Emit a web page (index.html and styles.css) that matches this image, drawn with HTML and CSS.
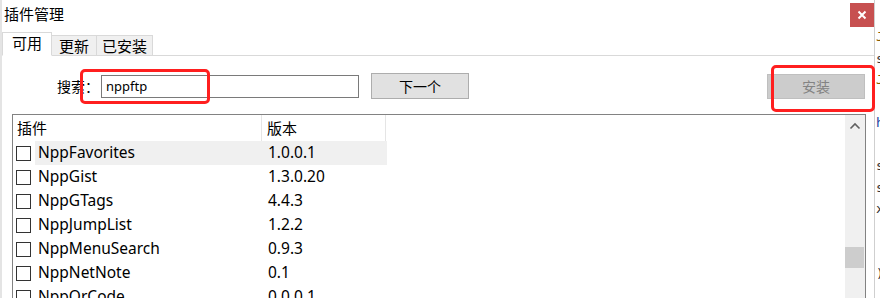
FILE: index.html
```html
<!DOCTYPE html>
<html lang="zh-CN">
<head>
  <meta charset="UTF-8" />
  <title>插件管理</title>
  <link rel="stylesheet" href="styles.css">
</head>
<body>
  <div class="screen">
    <div class="dialog">
      <div class="titlebar">
        <span class="title">插件管理</span>
        <span class="close">
          <svg width="10" height="10" viewBox="0 0 10 10"><path d="M1.5 1.5 L8.5 8.5 M8.5 1.5 L1.5 8.5" stroke="#fff" stroke-width="2"/></svg>
        </span>
      </div>
      <div class="tabs">
        <span class="tab active">可用</span>
        <span class="tab">更新</span>
        <span class="tab">已安装</span>
      </div>
      <div class="panel">
        <div class="search-row">
          <span class="label">搜索：</span>
          <span class="input">nppftp</span>
          <span class="btn">下一个</span>
          <span class="btn disabled">安装</span>
        </div>
        <div class="list">
          <div class="list-head">
            <span class="col">插件</span>
            <span class="col">版本</span>
            <span></span>
          </div>
          <div id="rows"></div>
          <div class="scrollbar">
            <svg class="arrow" width="12" height="8" viewBox="0 0 12 8"><path d="M1.5 6.5 L6 2 L10.5 6.5" fill="none" stroke="#606060" stroke-width="1.6"/></svg>
            <div class="thumb"></div>
          </div>
        </div>
        <span class="mark mark-search"></span>
        <span class="mark mark-install"></span>
      </div>
    </div>
    <div class="editor">
      <span class="c1">J</span><span>s</span><span class="c1">J</span><span>&nbsp;</span><span class="c2">h</span><span>&nbsp;</span><span>s</span><span>s</span><span>x</span><span>&nbsp;</span><span>&nbsp;</span><span>)</span>
    </div>
  </div>
  <script>
    const plugins = [
      ["NppFavorites", "1.0.0.1"],
      ["NppGist", "1.3.0.20"],
      ["NppGTags", "4.4.3"],
      ["NppJumpList", "1.2.2"],
      ["NppMenuSearch", "0.9.3"],
      ["NppNetNote", "0.1"],
      ["NppQrCode", "0.0.0.1"]
    ];
    const rows = document.getElementById("rows");
    plugins.forEach((p, i) => {
      const row = document.createElement("div");
      row.className = "row" + (i === 0 ? " hot" : "");
      row.innerHTML = `<span class="check"></span><span class="name">${p[0]}</span><span class="ver">${p[1]}</span>`;
      rows.appendChild(row);
    });
  </script>
</body>
</html>
```

FILE: styles.css
```css
body {
  margin: 0;
  background: #fff;
  font-family: "Noto Sans", "Noto Sans CJK SC", sans-serif;
  color: #000;
  overflow: hidden;
}
.screen {
  display: flex;
  width: 880px;
  height: 298px;
  overflow: hidden;
}
.dialog {
  width: 872px;
  flex: none;
  border-left: 2px solid #e4e4e4;
  border-right: 1px solid #cfcfcf;
  background: #fff;
  position: relative;
}
.titlebar {
  height: 31px;
  display: flex;
  justify-content: space-between;
  align-items: flex-start;
}
.title {
  font-family: "Noto Sans CJK SC", sans-serif;
  font-size: 15px;
  line-height: 20px;
  margin: 4px 0 0 2px;
}
.close {
  width: 24px;
  height: 24px;
  margin-top: 3px;
  background: #c75050;
  display: flex;
  align-items: center;
  justify-content: center;
}
.tabs {
  display: flex;
  align-items: flex-end;
  height: 24px;
  position: relative;
  z-index: 1;
}
.tab {
  font-family: "Noto Sans CJK SC", sans-serif;
  font-size: 15px;
  height: 20px;
  line-height: 19px;
  box-sizing: border-box;
  border: 1px solid #d9d9d9;
  border-bottom: none;
  background: #f0f0f0;
  text-align: center;
  width: 46px;
  margin-left: -1px;
}
.tab:nth-child(3) {
  width: 57px;
}
.tab.active {
  background: #fff;
  height: 24px;
  width: 50px;
  line-height: 20px;
  margin-left: 0;
  border-bottom: 1px solid #fff;
  z-index: 2;
  position: relative;
  top: 1px;
}
.panel {
  border-top: 1px solid #d9d9d9;
  position: relative;
}
.search-row {
  display: flex;
  align-items: center;
  height: 26px;
  padding: 17px 9px 0 55px;
}
.label {
  font-family: "Noto Sans CJK SC", sans-serif;
  font-size: 14px;
  width: 44px;
}
.input {
  height: 21px;
  border: 1px solid #7a7a7a;
  font-size: 13px;
  line-height: 21px;
  padding-left: 4px;
  width: 252px;
}
.btn {
  width: 96px;
  height: 24px;
  margin-left: 12px;
  border: 1px solid #adadad;
  background: #e1e1e1;
  font-family: "Noto Sans CJK SC", sans-serif;
  font-size: 14px;
  line-height: 24px;
  text-align: center;
}
.btn.disabled {
  margin-left: auto;
  background: #cccccc;
  border-color: #bfbfbf;
  color: #838383;
  height: 23px;
  line-height: 23px;
}
.list {
  margin: 15px 8px 0 10px;
  border: 1px solid #828282;
  height: 300px;
  position: relative;
  font-size: 15.5px;
}
.list-head {
  display: grid;
  grid-template-columns: 249px 124px 1fr;
  height: 26px;
}
.list-head .col {
  font-family: "Noto Sans CJK SC", sans-serif;
  font-size: 15px;
  line-height: 26px;
  padding-left: 4px;
  border-right: 1px solid #e5e5e5;
}
.list-head .col:nth-child(2) {
  padding-left: 5px;
}
.row {
  display: grid;
  grid-template-columns: 22px 228px 124px;
  height: 24px;
  align-items: center;
}
.check {
  width: 13px;
  height: 13px;
  border: 1px solid #333;
  margin-left: 3px;
}
.name, .ver {
  height: 24px;
  line-height: 23px;
}
.name {
  padding-left: 3px;
}
.ver {
  padding-left: 5px;
}
.row.hot .name, .row.hot .ver {
  background: #f0f0f0;
}
.scrollbar {
  position: absolute;
  right: 0;
  top: 0;
  bottom: 0;
  width: 20px;
  background: #f0f0f0;
}
.arrow {
  display: block;
  margin: 7px auto 0;
}
.thumb {
  position: absolute;
  left: 0;
  right: 1px;
  top: 132px;
  height: 21px;
  background: #cdcdcd;
}
.mark {
  position: absolute;
  border: 3px solid #ff1f1f;
  border-radius: 5px;
}
.mark-search {
  left: 78px;
  top: 13px;
  width: 124px;
  height: 29px;
}
.mark-install {
  left: 769px;
  top: 9px;
  width: 98px;
  height: 41px;
}
.editor {
  flex: 1;
  padding-top: 26px;
  font-family: "DejaVu Sans Mono", monospace;
  font-size: 13px;
  line-height: 21.5px;
  color: #333;
  display: flex;
  flex-direction: column;
  padding-left: 1px;
}
.editor .c1 {
  color: #8a5a00;
}
.editor .c2 {
  color: #1a3fa0;
}
```
